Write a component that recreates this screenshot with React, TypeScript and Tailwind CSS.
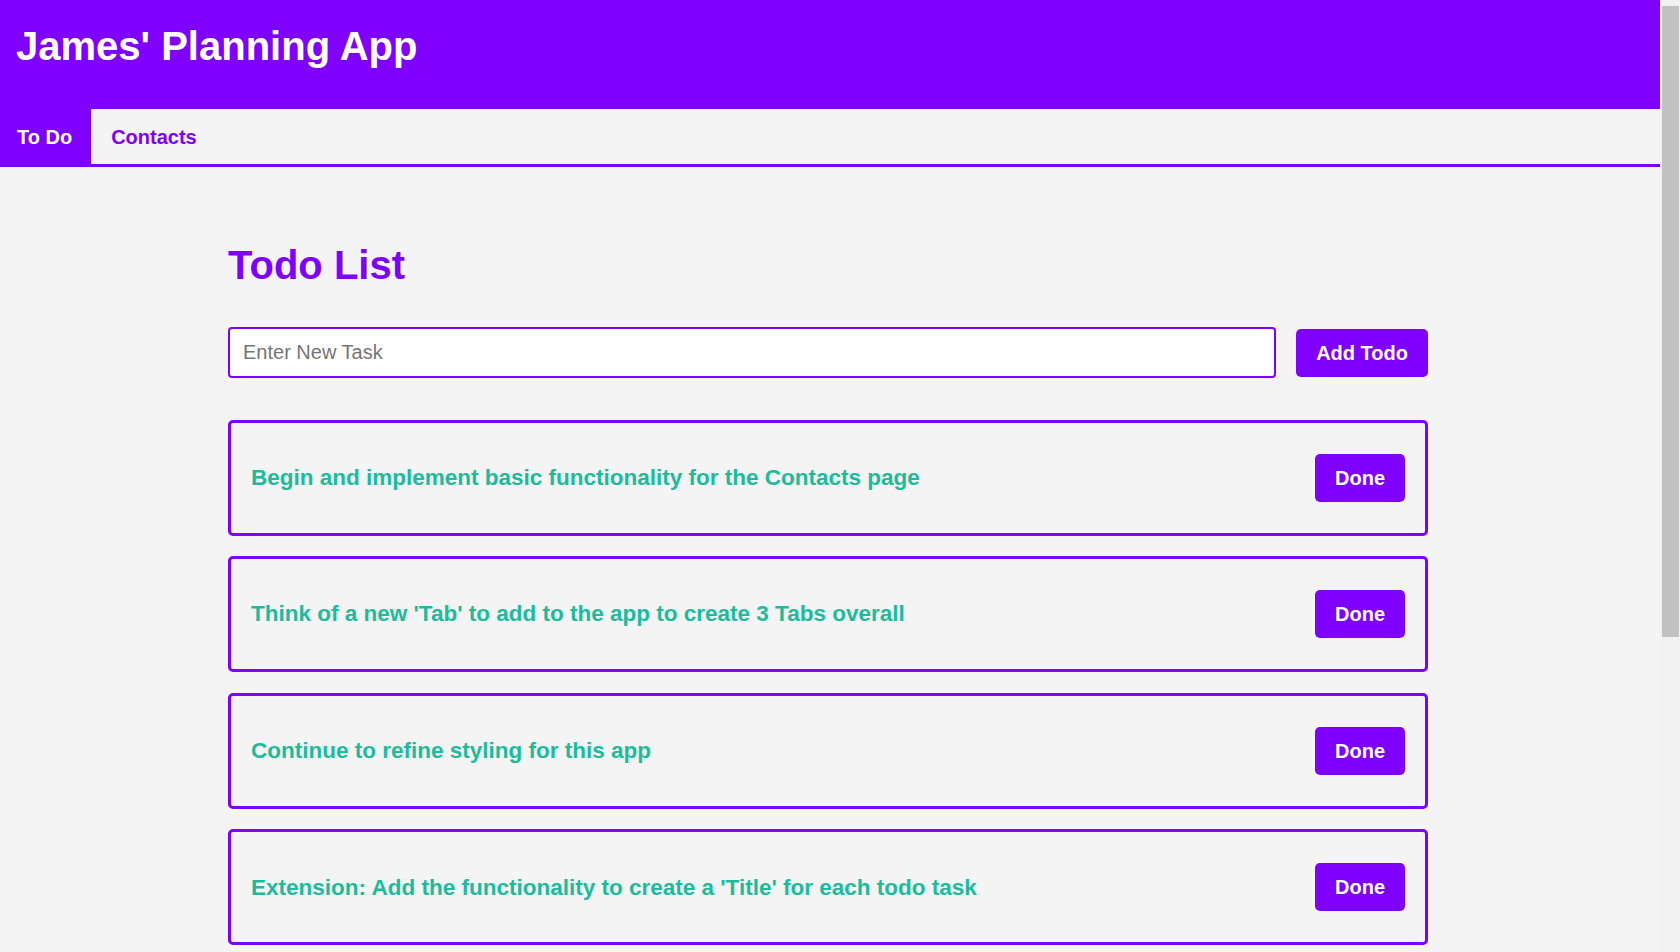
import React from "react";

const todos = [
  "Begin and implement basic functionality for the Contacts page",
  "Think of a new 'Tab' to add to the app to create 3 Tabs overall",
  "Continue to refine styling for this app",
  "Extension: Add the functionality to create a 'Title' for each todo task",
];

export default function App() {
  return (
    <div className="flex h-screen overflow-hidden bg-[#f4f4f4] font-['Liberation_Sans',Arial,sans-serif]">
      <div className="min-w-0 flex-1 overflow-hidden">
        <header className="h-[109px] bg-[#8000ff] px-4 pt-[23px]">
          <h1 className="text-[40px] leading-[46px] font-bold text-white">James' Planning App</h1>
        </header>
        <nav className="flex h-[58px] border-b-[3px] border-[#8000ff] bg-[#f4f4f4]">
          <button className="h-full bg-[#8000ff] pl-[17px] pr-[19px] text-[20px] font-bold text-white">
            To Do
          </button>
          <button className="h-full pl-[20px] pr-[18px] text-[20px] font-bold text-[#8000ff]">
            Contacts
          </button>
        </nav>
        <div className="pr-[4px]">
          <main className="mx-auto w-[1200px] pt-[75px] pb-[60px]">
            <h2 className="text-[40px] leading-[46px] font-bold text-[#8000ff]">Todo List</h2>
            <div className="mt-[39px] flex items-center gap-5">
              <input
                type="text"
                placeholder="Enter New Task"
                className="h-[51px] flex-1 rounded-[4px] border-2 border-[#8000ff] bg-white px-[13px] text-[20px] text-black outline-none placeholder:text-[#757575]"
              />
              <button className="h-[48px] rounded-[5px] bg-[#8000ff] px-[20px] text-[20px] font-bold text-white">
                Add Todo
              </button>
            </div>
            <div className="mt-[41.5px] flex flex-col gap-[20.67px]">
              {todos.map((t) => (
                <div
                  key={t}
                  className="flex h-[116px] items-center justify-between rounded-[5px] border-[3px] border-[#8000ff] px-[20px]"
                >
                  <p className="text-[22.5px] font-bold text-[#1abc9c]">{t}</p>
                  <button className="h-[48px] rounded-[5px] bg-[#8000ff] px-[20px] text-[20px] font-bold text-white">
                    Done
                  </button>
                </div>
              ))}
            </div>
          </main>
        </div>
      </div>
      <div className="w-[20px] shrink-0 bg-[#f1f1f1] pt-[6px]">
        <div className="ml-[2px] mr-[1px] h-[631px] bg-[#c1c1c1]" />
      </div>
    </div>
  );
}
